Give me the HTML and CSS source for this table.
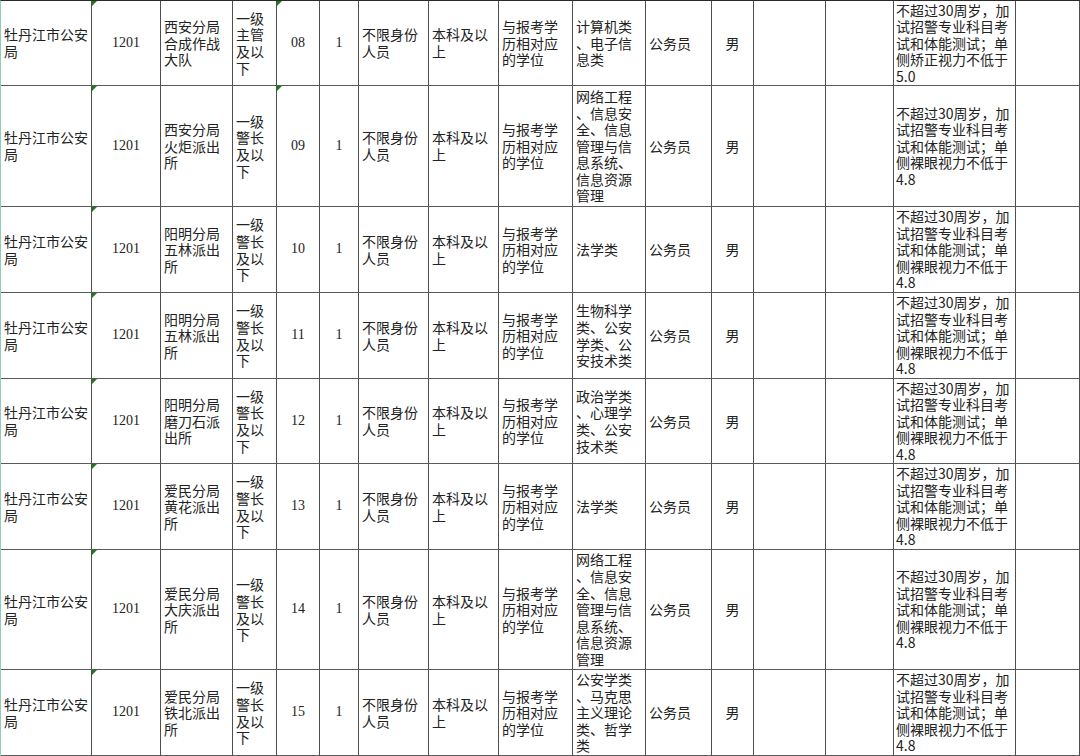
FILE: index.html
```html
<!DOCTYPE html>
<html lang="zh-CN">
<head>
<meta charset="utf-8">
<title>职位表</title>
<link rel="stylesheet" href="styles.css">
</head>
<body>
<div class="sheet">
  <div class="row">
    <div class="c">牡丹江市公安局</div><div class="c ctr num tri">1201</div><div class="c">西安分局合成作战大队</div><div class="c">一级主管及以下</div><div class="c ctr num tri">08</div><div class="c ctr num">1</div><div class="c">不限身份人员</div><div class="c">本科及以上</div><div class="c">与报考学历相对应的学位</div><div class="c">计算机类、电子信息类</div><div class="c">公务员</div><div class="c ctr">男</div><div class="c"></div><div class="c"></div><div class="c rm">不超过30周岁，加试招警专业科目考试和体能测试；单侧矫正视力不低于5.0</div><div class="c"></div>
  </div>
  <div class="row">
    <div class="c">牡丹江市公安局</div><div class="c ctr num tri">1201</div><div class="c">西安分局火炬派出所</div><div class="c">一级警长及以下</div><div class="c ctr num tri">09</div><div class="c ctr num">1</div><div class="c">不限身份人员</div><div class="c">本科及以上</div><div class="c">与报考学历相对应的学位</div><div class="c">网络工程、信息安全、信息管理与信息系统、信息资源管理</div><div class="c">公务员</div><div class="c ctr">男</div><div class="c"></div><div class="c"></div><div class="c rm">不超过30周岁，加试招警专业科目考试和体能测试；单侧裸眼视力不低于4.8</div><div class="c"></div>
  </div>
  <div class="row">
    <div class="c">牡丹江市公安局</div><div class="c ctr num tri">1201</div><div class="c">阳明分局五林派出所</div><div class="c">一级警长及以下</div><div class="c ctr num">10</div><div class="c ctr num">1</div><div class="c">不限身份人员</div><div class="c">本科及以上</div><div class="c">与报考学历相对应的学位</div><div class="c">法学类</div><div class="c">公务员</div><div class="c ctr">男</div><div class="c"></div><div class="c"></div><div class="c rm">不超过30周岁，加试招警专业科目考试和体能测试；单侧裸眼视力不低于4.8</div><div class="c"></div>
  </div>
  <div class="row">
    <div class="c">牡丹江市公安局</div><div class="c ctr num tri">1201</div><div class="c">阳明分局五林派出所</div><div class="c">一级警长及以下</div><div class="c ctr num">11</div><div class="c ctr num">1</div><div class="c">不限身份人员</div><div class="c">本科及以上</div><div class="c">与报考学历相对应的学位</div><div class="c">生物科学类、公安学类、公安技术类</div><div class="c">公务员</div><div class="c ctr">男</div><div class="c"></div><div class="c"></div><div class="c rm">不超过30周岁，加试招警专业科目考试和体能测试；单侧裸眼视力不低于4.8</div><div class="c"></div>
  </div>
  <div class="row">
    <div class="c">牡丹江市公安局</div><div class="c ctr num tri">1201</div><div class="c">阳明分局磨刀石派出所</div><div class="c">一级警长及以下</div><div class="c ctr num">12</div><div class="c ctr num">1</div><div class="c">不限身份人员</div><div class="c">本科及以上</div><div class="c">与报考学历相对应的学位</div><div class="c">政治学类、心理学类、公安技术类</div><div class="c">公务员</div><div class="c ctr">男</div><div class="c"></div><div class="c"></div><div class="c rm">不超过30周岁，加试招警专业科目考试和体能测试；单侧裸眼视力不低于4.8</div><div class="c"></div>
  </div>
  <div class="row">
    <div class="c">牡丹江市公安局</div><div class="c ctr num tri">1201</div><div class="c">爱民分局黄花派出所</div><div class="c">一级警长及以下</div><div class="c ctr num">13</div><div class="c ctr num">1</div><div class="c">不限身份人员</div><div class="c">本科及以上</div><div class="c">与报考学历相对应的学位</div><div class="c">法学类</div><div class="c">公务员</div><div class="c ctr">男</div><div class="c"></div><div class="c"></div><div class="c rm">不超过30周岁，加试招警专业科目考试和体能测试；单侧裸眼视力不低于4.8</div><div class="c"></div>
  </div>
  <div class="row">
    <div class="c">牡丹江市公安局</div><div class="c ctr num tri">1201</div><div class="c">爱民分局大庆派出所</div><div class="c">一级警长及以下</div><div class="c ctr num">14</div><div class="c ctr num">1</div><div class="c">不限身份人员</div><div class="c">本科及以上</div><div class="c">与报考学历相对应的学位</div><div class="c">网络工程、信息安全、信息管理与信息系统、信息资源管理</div><div class="c">公务员</div><div class="c ctr">男</div><div class="c"></div><div class="c"></div><div class="c rm">不超过30周岁，加试招警专业科目考试和体能测试；单侧裸眼视力不低于4.8</div><div class="c"></div>
  </div>
  <div class="row">
    <div class="c">牡丹江市公安局</div><div class="c ctr num tri">1201</div><div class="c">爱民分局铁北派出所</div><div class="c">一级警长及以下</div><div class="c ctr num">15</div><div class="c ctr num">1</div><div class="c">不限身份人员</div><div class="c">本科及以上</div><div class="c">与报考学历相对应的学位</div><div class="c">公安学类、马克思主义理论类、哲学类</div><div class="c">公务员</div><div class="c ctr">男</div><div class="c"></div><div class="c"></div><div class="c rm">不超过30周岁，加试招警专业科目考试和体能测试；单侧裸眼视力不低于4.8</div><div class="c"></div>
  </div>
</div>
</body>
</html>
```
FILE: styles.css
```css
html, body {
  margin: 0;
  padding: 0;
  background: #ffffff;
}

.sheet {
  box-sizing: border-box;
  width: 1080px;
  height: 756px;
  display: grid;
  grid-template-columns: 91px 69px 72px 44px 43px 39px 70px 70px 74px 73px 66px 42px 72px 68px 122px 64px;
  grid-template-rows: 85px 121px 86px 86px 85px 86px 120px 86px;
  border-left: 1px solid #8fcdb8;
  border-top: 1px solid #2a2a2a;
  background: #ffffff;
  overflow: hidden;
  font-family: "Noto Sans CJK SC", sans-serif;
  font-size: 14px;
  line-height: 16.6px;
  color: #222222;
}

.row {
  display: contents;
}

.c {
  box-sizing: border-box;
  position: relative;
  display: flex;
  align-items: center;
  justify-content: flex-start;
  padding: 0 2px 0 3px;
  border-right: 1px solid #4f4f4f;
  border-bottom: 1px solid #5a5a5a;
  overflow: hidden;
  line-break: anywhere;
  word-break: break-all;
}

.ctr {
  justify-content: center;
  padding: 0;
}

.num {
  font-family: "Liberation Serif", "Noto Sans CJK SC", serif;
}

.rm {
  padding-left: 2px;
}

.tri::before {
  content: "";
  position: absolute;
  top: 0;
  left: 0;
  width: 0;
  height: 0;
  border-top: 5px solid #1f7a1f;
  border-right: 5px solid transparent;
}
```
